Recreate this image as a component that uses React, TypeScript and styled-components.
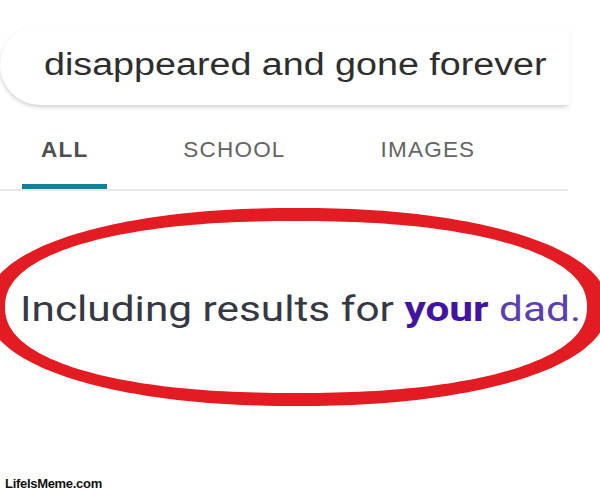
import React from "react";
import styled, { createGlobalStyle } from "styled-components";

const Global = createGlobalStyle`
  html, body { margin: 0; padding: 0; background: #ffffff; }
  #root { width: 600px; height: 495px; }
`;

const Page = styled.div`
  position: relative;
  width: 600px;
  height: 495px;
  overflow: hidden;
  background: #ffffff;
  display: flex;
  flex-direction: column;
`;

const SearchBox = styled.div`
  margin-top: 25px;
  width: 570px;
  height: 80px;
  box-sizing: border-box;
  padding-left: 44px;
  display: flex;
  align-items: center;
  border-radius: 40px 0 0 40px;
  background: #ffffff;
  box-shadow: 0 4px 5px -2px rgba(0, 0, 0, 0.16), -2px 1px 4px -1px rgba(0, 0, 0, 0.08);
`;

const Stretch = styled.span<{ $sx: number }>`
  display: inline-block;
  white-space: nowrap;
  transform: scaleX(${(p) => p.$sx});
  transform-origin: left center;
`;

const SearchText = styled(Stretch)`
  font-family: "Liberation Sans", Arial, sans-serif;
  font-size: 31px;
  color: #2e2e2e;
`;

const TabBar = styled.div`
  width: 568px;
  box-sizing: border-box;
  display: flex;
  gap: 57px;
  padding: 34px 0 0 22px;
  border-bottom: 2px solid #e9e9e9;
`;

const Tab = styled.div`
  display: flex;
  flex-direction: column;
  align-items: center;
`;

const TabLabel = styled.span<{ $active?: boolean }>`
  padding: 0 19px;
  font-family: "Liberation Sans", Arial, sans-serif;
  font-size: 22.5px;
  line-height: 1;
  letter-spacing: 1.2px;
  font-weight: ${(p) => (p.$active ? 700 : 400)};
  color: ${(p) => (p.$active ? "#4f4f4f" : "#646464")};
`;

const Indicator = styled.div<{ $active?: boolean }>`
  align-self: stretch;
  margin-top: 22px;
  height: 5px;
  background: ${(p) => (p.$active ? "#1b7d98" : "transparent")};
`;

const ResultLine = styled.div`
  margin-top: 101px;
  padding-left: 20px;
`;

const ResultText = styled(Stretch)`
  font-family: Roboto, "Liberation Sans", sans-serif;
  font-size: 35px;
  line-height: 1;
  color: #363843;
`;

const Strong = styled.b`
  font-weight: 700;
  color: #4313a2;
`;

const Faded = styled.span`
  color: #5a40ae;
`;

const Annotation = styled.svg`
  position: absolute;
  left: 0;
  top: 0;
  pointer-events: none;
`;

const Watermark = styled.div`
  position: absolute;
  left: 5px;
  bottom: 4px;
  font-family: "Liberation Sans", Arial, sans-serif;
  font-weight: 700;
  font-size: 13px;
  color: #111111;
  letter-spacing: -0.3px;
`;

function superellipse(cx: number, cy: number, rx: number, ry: number, n: number, steps = 240) {
  const pts: string[] = [];
  for (let i = 0; i < steps; i++) {
    const t = (i / steps) * Math.PI * 2;
    const c = Math.cos(t);
    const s = Math.sin(t);
    const x = cx + rx * Math.sign(c) * Math.pow(Math.abs(c), 2 / n);
    const y = cy + ry * Math.sign(s) * Math.pow(Math.abs(s), 2 / n);
    pts.push(`${i === 0 ? "M" : "L"}${x.toFixed(1)} ${y.toFixed(1)}`);
  }
  return pts.join(" ") + " Z";
}

export default function App() {
  const ring = superellipse(297, 307, 311, 99, 2.15) + " " + superellipse(296, 307, 291, 86, 2.25);
  return (
    <>
      <Global />
      <Page>
        <SearchBox>
          <SearchText $sx={1.215}>disappeared and gone forever</SearchText>
        </SearchBox>
        <TabBar>
          <Tab>
            <TabLabel $active>ALL</TabLabel>
            <Indicator $active />
          </Tab>
          <Tab>
            <TabLabel>SCHOOL</TabLabel>
            <Indicator />
          </Tab>
          <Tab>
            <TabLabel>IMAGES</TabLabel>
            <Indicator />
          </Tab>
        </TabBar>
        <ResultLine>
          <ResultText $sx={1.21}>
            Including results for <Strong>your</Strong> <Faded>dad.</Faded>
          </ResultText>
        </ResultLine>
        <Annotation width="600" height="495" viewBox="0 0 600 495">
          <path d={ring} fill="#e31b23" fillRule="evenodd" />
        </Annotation>
        <Watermark>LifeIsMeme.com</Watermark>
      </Page>
    </>
  );
}
